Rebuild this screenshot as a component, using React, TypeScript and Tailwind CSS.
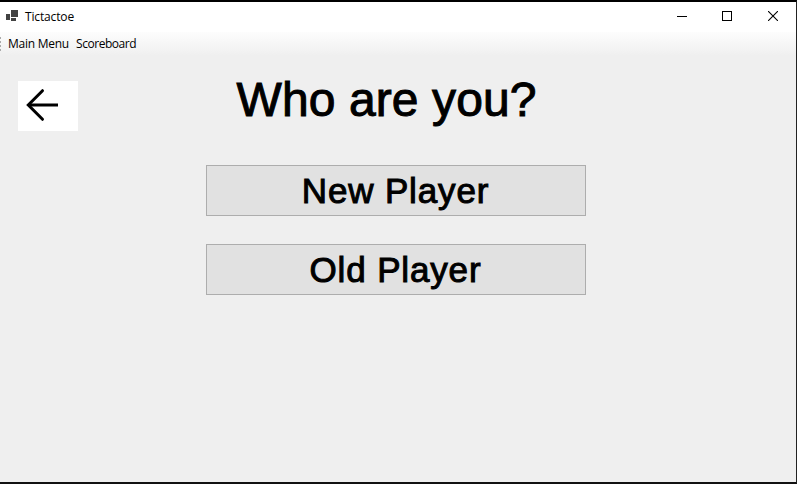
import React from "react";

const uiFont = "font-['Open_Sans','Noto_Sans',sans-serif]";
const formFont = "font-['Liberation_Sans',Arial,sans-serif]";

function TitleBar() {
  return (
    <header className="flex h-[30px] shrink-0 items-center bg-white">
      <svg className="mb-[3px] ml-[6px] h-[11px] w-3" viewBox="0 0 12 11" shapeRendering="crispEdges" fill="#424242">
        <rect x="0" y="4" width="4" height="6" />
        <rect x="5" y="0" width="7" height="7" />
        <rect x="5" y="8" width="5" height="3" />
      </svg>
      <h1 className={`${uiFont} ml-[7px] flex-1 text-[12px] tracking-[-0.15px] text-black`}>Tictactoe</h1>
      <div className="flex items-center text-black">
        <button aria-label="Minimize" className="flex h-[30px] w-[45px] items-center justify-center">
          <svg width="10" height="10" shapeRendering="crispEdges"><rect y="4" width="10" height="1" /></svg>
        </button>
        <button aria-label="Maximize" className="flex h-[30px] w-[45px] items-center justify-center">
          <svg className="mb-[2px]" width="10" height="10" fill="none" stroke="currentColor" shapeRendering="crispEdges"><rect x="0.5" y="0.5" width="9" height="9" /></svg>
        </button>
        <button aria-label="Close" className="flex h-[30px] w-[47px] items-center justify-center pb-[2px]">
          <svg className="ml-px" width="10" height="10" stroke="currentColor" strokeWidth="1.1"><path d="M0 0L10 10M10 0L0 10" /></svg>
        </button>
      </div>
    </header>
  );
}

function MenuBar() {
  return (
    <nav className={`${uiFont} flex h-6 shrink-0 items-center bg-linear-to-b from-[#fdfdfd] to-[#efefef] text-[12px] text-black`}>
      <svg width="1" height="14" shapeRendering="crispEdges" fill="#aaa">
        <rect y="0" width="1" height="2" />
        <rect y="4" width="1" height="2" />
        <rect y="8" width="1" height="2" />
        <rect y="12" width="1" height="2" />
      </svg>
      <button className="ml-[7px] w-[68px] text-left tracking-[-0.25px] whitespace-nowrap">Main Menu</button>
      <button className="w-[61px] text-left tracking-[-0.45px] whitespace-nowrap">Scoreboard</button>
    </nav>
  );
}

function PlayerButton({ children }: { children: React.ReactNode }) {
  return (
    <button className={`${formFont} flex h-[51px] w-[380px] items-center justify-center border border-[#adadad] bg-[#e1e1e1] pr-px text-[35px] leading-none tracking-[0.85px] text-black [-webkit-text-stroke:1px_black]`}>
      {children}
    </button>
  );
}

export default function App() {
  return (
    <div className="flex h-[484px] w-[797px] flex-col overflow-hidden border-t-2 border-r border-b-2 border-t-black border-r-[#222] border-b-[#111] bg-[#efefef]">
      <TitleBar />
      <MenuBar />
      <main className="flex flex-1 items-start">
        <button aria-label="Back" className="mt-[25px] ml-[18px] h-[50px] w-[60px] shrink-0 bg-white">
          <svg width="60" height="50" fill="none" stroke="#000" strokeWidth="3">
            <path d="M40 24H10" />
            <path d="M24.5 9.7L10.3 24L24.5 38.3" strokeLinecap="round" />
          </svg>
        </button>
        <section className="ml-32 flex w-[380px] flex-col items-center">
          <h2 className={`${formFont} mt-[16px] mr-[19px] h-[56px] text-[48px] leading-[56px] tracking-[0.1px] whitespace-nowrap text-black [-webkit-text-stroke:1px_black]`}>Who are you?</h2>
          <div className="mt-[37px] flex flex-col gap-7">
            <PlayerButton>New Player</PlayerButton>
            <PlayerButton>Old Player</PlayerButton>
          </div>
        </section>
      </main>
    </div>
  );
}
